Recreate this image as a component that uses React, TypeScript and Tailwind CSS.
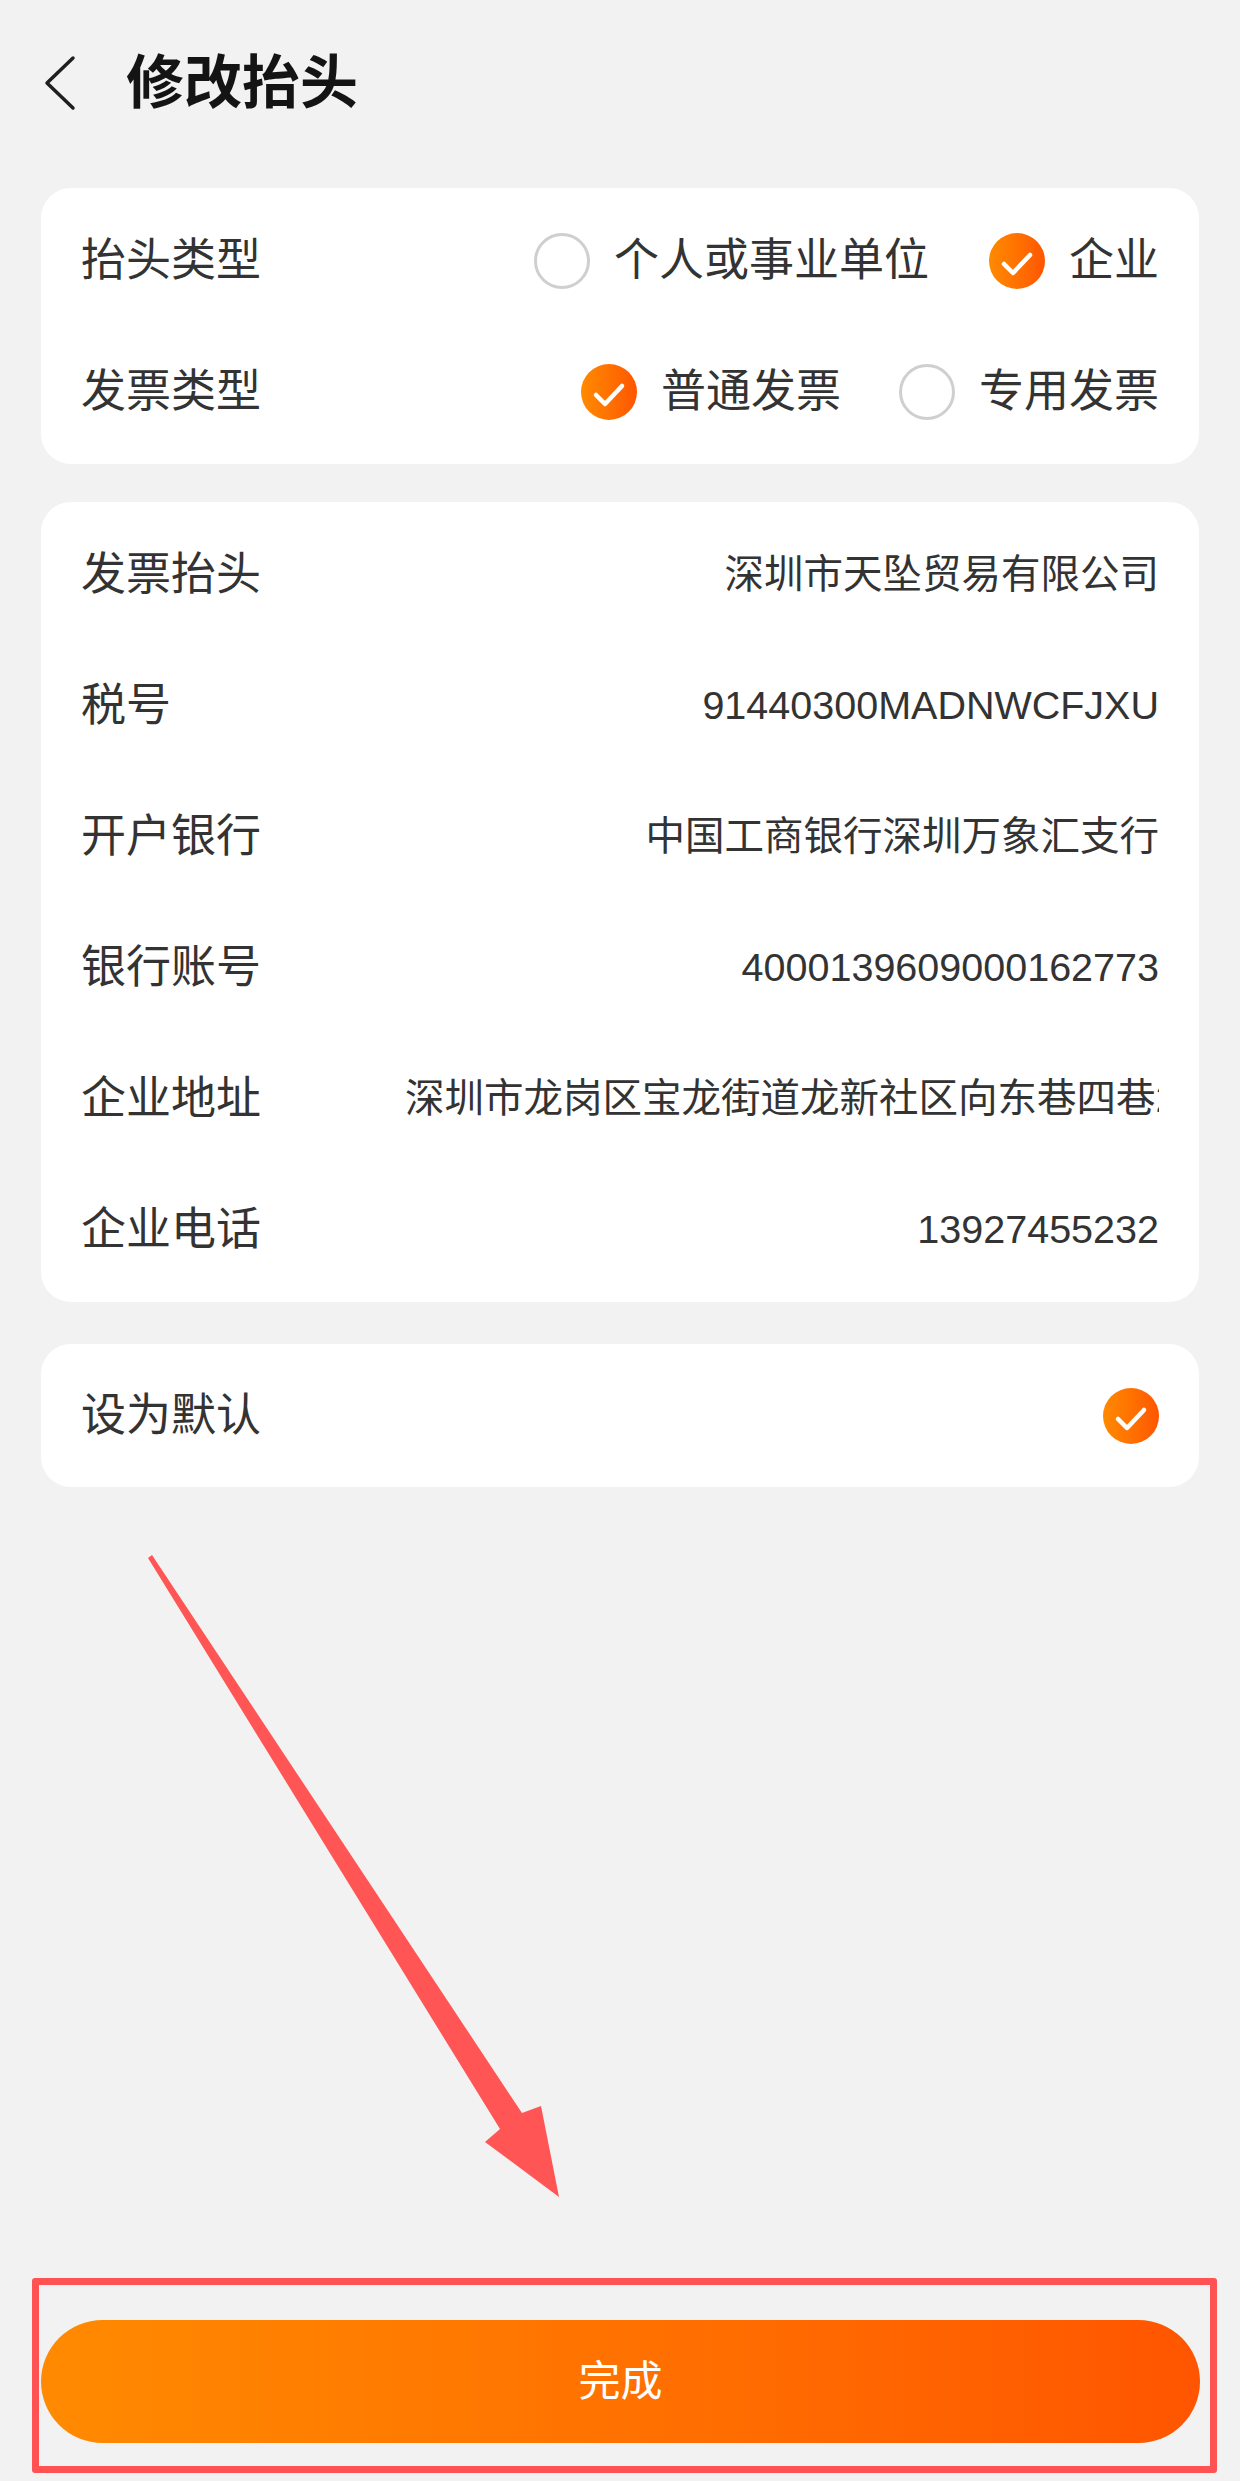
import React from "react";

const FONT = "font-['Liberation_Sans','Noto_Sans_CJK_SC',sans-serif]";

const CheckMark: React.FC = () => (
  <div className="w-[56px] h-[56px] shrink-0 rounded-full bg-linear-to-r from-[#ff8a00] to-[#ff5500] flex items-center justify-center">
    <svg width="56" height="56" viewBox="0 0 56 56" fill="none">
      <polyline
        points="15,31 24,40 41,22"
        stroke="#ffffff"
        strokeWidth="4.5"
        strokeLinecap="round"
        strokeLinejoin="round"
      />
    </svg>
  </div>
);

const EmptyCircle: React.FC = () => (
  <div className="w-[56px] h-[56px] shrink-0 rounded-full border-[3px] border-[#cfcfcf] bg-white" />
);

interface OptionProps {
  label: string;
  checked?: boolean;
}

const Option: React.FC<OptionProps> = ({ label, checked }) => (
  <div className="flex items-center gap-[24px]">
    {checked ? <CheckMark /> : <EmptyCircle />}
    <span className="text-[45px] leading-none text-[#333333]">{label}</span>
  </div>
);

const fields = [
  { label: "发票抬头", value: "深圳市天坠贸易有限公司" },
  { label: "税号", value: "91440300MADNWCFJXU" },
  { label: "开户银行", value: "中国工商银行深圳万象汇支行" },
  { label: "银行账号", value: "4000139609000162773" },
  { label: "企业地址", value: "深圳市龙岗区宝龙街道龙新社区向东巷四巷2号" },
  { label: "企业电话", value: "13927455232" },
];

export default function App() {
  return (
    <div className={`relative w-[1240px] h-[2481px] bg-[#f2f2f2] flex flex-col ${FONT}`}>
      {/* header */}
      <div className="h-[166px] shrink-0 flex items-center pl-[44px]">
        <svg width="32" height="56" viewBox="0 0 32 56" fill="none">
          <polyline
            points="29,3 3,28 29,53"
            stroke="#1f1f1f"
            strokeWidth="3.5"
            strokeLinecap="round"
            strokeLinejoin="round"
          />
        </svg>
        <h1 className="ml-[50px] text-[58px] leading-none font-bold text-[#141414]">修改抬头</h1>
      </div>

      {/* type card */}
      <div className="mt-[22px] mx-[41px] bg-white rounded-[30px] px-[40px] py-[7px]">
        <div className="h-[131px] flex items-center justify-between">
          <span className="text-[45px] leading-none text-[#333333]">抬头类型</span>
          <div className="flex items-center gap-[60px]">
            <Option label="个人或事业单位" />
            <Option label="企业" checked />
          </div>
        </div>
        <div className="h-[131px] flex items-center justify-between">
          <span className="text-[45px] leading-none text-[#333333]">发票类型</span>
          <div className="flex items-center gap-[58px]">
            <Option label="普通发票" checked />
            <Option label="专用发票" />
          </div>
        </div>
      </div>

      {/* details card */}
      <div className="mt-[38px] mx-[41px] bg-white rounded-[30px] px-[40px] py-[7px]">
        {fields.map((f) => (
          <div key={f.label} className="h-[131px] flex items-center">
            <span className="w-[324px] shrink-0 text-[45px] leading-none text-[#333333]">{f.label}</span>
            <span className="flex-1 min-w-0 overflow-hidden whitespace-nowrap text-right text-[39.5px] leading-[1.5] text-[#333333]">
              {f.value}
            </span>
          </div>
        ))}
      </div>

      {/* default card */}
      <div className="mt-[42px] mx-[41px] bg-white rounded-[30px] px-[40px] py-[6px]">
        <div className="h-[131px] flex items-center justify-between">
          <span className="text-[45px] leading-none text-[#333333]">设为默认</span>
          <CheckMark />
        </div>
      </div>

      <div className="flex-1" />

      {/* button with annotation frame */}
      <div className="mx-[32px] mb-[8px] w-[1185px] border-[7px] border-[#ff5252] rounded-[3px] pl-[2px] pr-[10px] pt-[35px] pb-[23px]">
        <button className="w-full h-[123px] rounded-full bg-linear-to-r from-[#ff8a00] to-[#ff5500] flex items-center justify-center">
          <span className="text-[42px] leading-none text-white">完成</span>
        </button>
      </div>

      {/* annotation arrow */}
      <svg
        className="absolute inset-0 pointer-events-none"
        width="1240"
        height="2481"
        viewBox="0 0 1240 2481"
      >
        <polygon
          points="152,1555 522,2113 541,2106 559,2197 485,2142 500,2129 148,1558"
          fill="#ff5555"
        />
      </svg>
    </div>
  );
}
